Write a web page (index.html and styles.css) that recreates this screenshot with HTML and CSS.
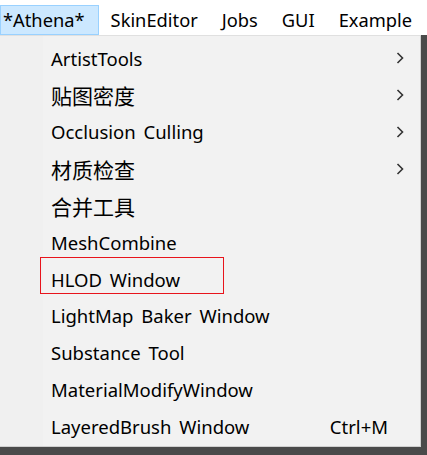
FILE: index.html
```html
<!DOCTYPE html>
<html>
<head>
<meta charset="utf-8">
<link rel="stylesheet" href="styles.css">
</head>
<body>
<div class="menubar">
  <div class="mb-item active">*Athena*</div>
  <div class="mb-item">SkinEditor</div>
  <div class="mb-item">Jobs</div>
  <div class="mb-item">GUI</div>
  <div class="mb-item">Example</div>
</div>
<div class="stage">
  <div class="menu">
    <div class="row"><span class="label">ArtistTools</span><svg class="chev" width="8" height="12" viewBox="0 0 8 12"><path d="M1.5 1 L6.5 6 L1.5 11" fill="none" stroke="#333" stroke-width="1.6"/></svg></div>
    <div class="row"><span class="label cjk">贴图密度</span><svg class="chev" width="8" height="12" viewBox="0 0 8 12"><path d="M1.5 1 L6.5 6 L1.5 11" fill="none" stroke="#333" stroke-width="1.6"/></svg></div>
    <div class="row"><span class="label">Occlusion Culling</span><svg class="chev" width="8" height="12" viewBox="0 0 8 12"><path d="M1.5 1 L6.5 6 L1.5 11" fill="none" stroke="#333" stroke-width="1.6"/></svg></div>
    <div class="row"><span class="label cjk">材质检查</span><svg class="chev" width="8" height="12" viewBox="0 0 8 12"><path d="M1.5 1 L6.5 6 L1.5 11" fill="none" stroke="#333" stroke-width="1.6"/></svg></div>
    <div class="row"><span class="label cjk">合并工具</span></div>
    <div class="row"><span class="label">MeshCombine</span></div>
    <div class="row"><span class="label">HLOD Window</span></div>
    <div class="row"><span class="label">LightMap Baker Window</span></div>
    <div class="row"><span class="label">Substance Tool</span></div>
    <div class="row"><span class="label">MaterialModifyWindow</span></div>
    <div class="row"><span class="label">LayeredBrush Window</span><span class="shortcut">Ctrl+M</span></div>
    <div class="highlight"></div>
  </div>
</div>
</body>
</html>
```

FILE: styles.css
```css
html, body {
  margin: 0;
  padding: 0;
}
body {
  width: 427px;
  height: 455px;
  overflow: hidden;
  background: #4a4a4a;
  font-family: "Noto Sans", "Noto Sans CJK SC", sans-serif;
  color: #000;
}
.menubar {
  height: 32px;
  background: #fff;
  display: flex;
  align-items: flex-end;
  padding-top: 3px;
  box-sizing: content-box;
}
.mb-item {
  font-size: 18.3px;
  height: 30px;
  line-height: 28px;
  padding: 0 11px;
  box-sizing: border-box;
  border: 1px solid transparent;
  white-space: nowrap;
}
.mb-item.active {
  background: #cce8ff;
  border-color: #99d1ff;
  padding: 0 13px 0 2px;
}
.stage {
  height: 420px;
  background: #4a4a4a;
}
.menu {
  position: relative;
  width: 421px;
  height: 412px;
  box-sizing: border-box;
  border-right: 1px solid #d0d0d0;
  border-bottom: 1px solid #d0d0d0;
  border-top: 1px solid #e0e0e0;
  background: linear-gradient(to right, #f0f0f0 0, #f0f0f0 43px, #f2f2f2 43px);
  padding-top: 4px;
  box-shadow: 3px 3px 0 #4a4a4a;
}
.row {
  height: 36.8px;
  display: flex;
  align-items: center;
  padding-left: 51px;
  padding-right: 16px;
  font-size: 18.5px;
  white-space: nowrap;
}
.label {
  flex: 1;
  word-spacing: 3px;
}
.cjk {
  font-family: "Noto Sans CJK SC", sans-serif;
  font-size: 21px;
  word-spacing: 0;
}
.chev {
  display: block;
}
.shortcut {
  margin-right: 16px;
}
.highlight {
  position: absolute;
  left: 40px;
  top: 221px;
  width: 184px;
  height: 37px;
  box-sizing: border-box;
  border: 1px solid #e8141c;
}
```
